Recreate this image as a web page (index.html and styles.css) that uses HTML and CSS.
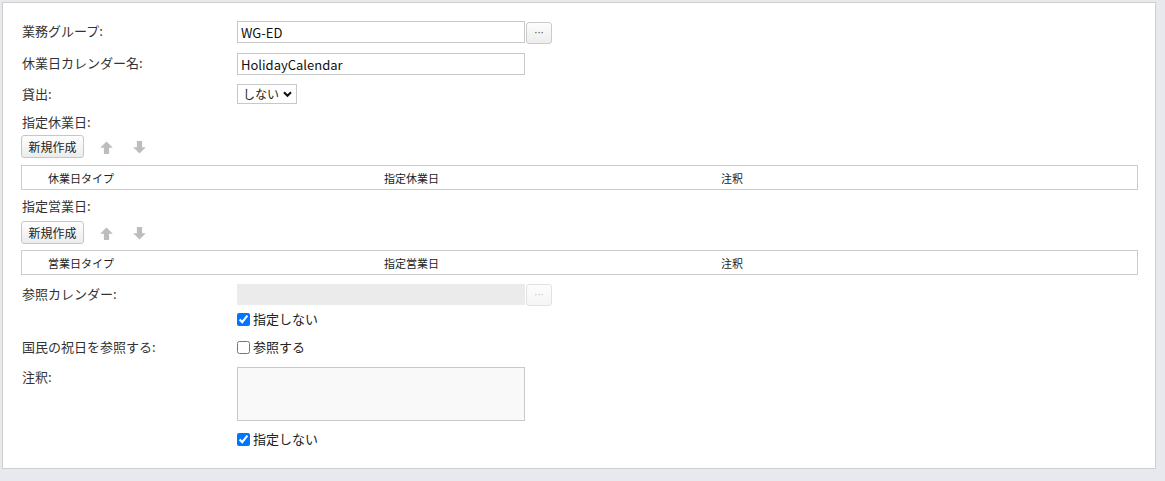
FILE: index.html
```html
<!DOCTYPE html>
<html lang="ja">
<head>
<meta charset="utf-8">
<link rel="stylesheet" href="styles.css">
</head>
<body>
<div class="panel">
  <div class="row r1">
    <div class="label">業務グループ:</div>
    <div class="field">
      <input class="text" type="text" value="WG-ED">
      <button class="dots">&middot;&middot;&middot;</button>
    </div>
  </div>
  <div class="row r2">
    <div class="label">休業日カレンダー名:</div>
    <div class="field"><input class="text" type="text" value="HolidayCalendar"></div>
  </div>
  <div class="row r3">
    <div class="label">貸出:</div>
    <div class="field">
      <span class="select-wrap">
        <select class="select"><option>しない</option></select>
        <svg class="chev" viewBox="0 0 10 8" width="9" height="7"><path d="M1 1.5 L5 5.5 L9 1.5" fill="none" stroke="#111" stroke-width="2.4"/></svg>
      </span>
    </div>
  </div>

  <div class="section s1">
    <div class="sec-label">指定休業日:</div>
    <div class="toolbar">
      <button class="btn">新規作成</button>
      <svg class="arrow" viewBox="0 0 12 12" width="13" height="13"><path d="M6 0.5 L11.8 6.3 L8.4 6.3 L8.4 12 L3.6 12 L3.6 6.3 L0.2 6.3 Z" fill="#bdbdbd"/></svg>
      <svg class="arrow" viewBox="0 0 12 12" width="13" height="13"><path d="M6 11.5 L11.8 5.7 L8.4 5.7 L8.4 0 L3.6 0 L3.6 5.7 L0.2 5.7 Z" fill="#bdbdbd"/></svg>
    </div>
    <div class="grid-head">
      <div class="c1">休業日タイプ</div>
      <div class="c2">指定休業日</div>
      <div class="c3">注釈</div>
    </div>
  </div>

  <div class="section s2">
    <div class="sec-label">指定営業日:</div>
    <div class="toolbar">
      <button class="btn">新規作成</button>
      <svg class="arrow" viewBox="0 0 12 12" width="13" height="13"><path d="M6 0.5 L11.8 6.3 L8.4 6.3 L8.4 12 L3.6 12 L3.6 6.3 L0.2 6.3 Z" fill="#bdbdbd"/></svg>
      <svg class="arrow" viewBox="0 0 12 12" width="13" height="13"><path d="M6 11.5 L11.8 5.7 L8.4 5.7 L8.4 0 L3.6 0 L3.6 5.7 L0.2 5.7 Z" fill="#bdbdbd"/></svg>
    </div>
    <div class="grid-head">
      <div class="c1">営業日タイプ</div>
      <div class="c2">指定営業日</div>
      <div class="c3">注釈</div>
    </div>
  </div>

  <div class="row r4">
    <div class="label">参照カレンダー:</div>
    <div class="field col">
      <div class="inline">
        <input class="text disabled" type="text" disabled>
        <button class="dots off" disabled>&middot;&middot;&middot;</button>
      </div>
      <label class="check c-a"><input type="checkbox" checked><span>指定しない</span></label>
    </div>
  </div>

  <div class="row r5">
    <div class="label">国民の祝日を参照する:</div>
    <div class="field">
      <label class="check"><input type="checkbox"><span>参照する</span></label>
    </div>
  </div>

  <div class="row r6">
    <div class="label">注釈:</div>
    <div class="field col">
      <textarea class="note"></textarea>
      <label class="check c-b"><input type="checkbox" checked><span>指定しない</span></label>
    </div>
  </div>
</div>
</body>
</html>
```
FILE: styles.css
```css
* { box-sizing: border-box; }
html, body { margin: 0; padding: 0; }
body {
  background: #e8e9ee;
  font-family: "Noto Sans CJK JP", "Noto Sans", sans-serif;
  font-size: 13px;
  color: #333;
  height: 481px;
  overflow: hidden;
}
.panel {
  margin: 2px 0 0 2px;
  width: 1154px;
  height: 467px;
  background: #fff;
  border: 1px solid #cfcfcf;
  padding: 18px 17px 0 18px;
}
.row { display: flex; align-items: flex-start; }
.label {
  width: 216px;
  flex: none;
  line-height: 20px;
  padding-left: 1px;
}
.field { display: flex; align-items: flex-start; }
.field.col { flex-direction: column; }
.inline { display: flex; align-items: flex-start; }
.r2 { margin-top: 9px; }
.r3 { margin-top: 9px; }
input.text {
  width: 288px;
  height: 22px;
  border: 1px solid #c8c8c8;
  padding: 0 3px;
  font: inherit;
  font-size: 13px;
  color: #111;
  outline: none;
}
input.text.disabled { background: #ebebeb; border-color: #ebebeb; height: 21px; }
.dots {
  width: 26px;
  height: 22px;
  margin: 1px 0 0 1px;
  border: 1px solid #cbcbcb;
  border-radius: 3px;
  background: linear-gradient(#fdfdfd, #ededed);
  font-size: 10px;
  line-height: 20px;
  color: #444;
  padding: 0;
  font-family: "DejaVu Sans", sans-serif;
  letter-spacing: 0;
  text-align: center;
}
.dots.off { color: #c4c4c4; border-color: #e2e2e2; background: linear-gradient(#fdfdfd, #f5f5f5); margin-top: 0; }
.select-wrap { position: relative; display: inline-block; }
.select {
  appearance: none;
  -webkit-appearance: none;
  width: 60px;
  height: 20px;
  border: 1px solid #c8c8c8;
  border-radius: 0;
  background: #fff;
  font: inherit;
  font-size: 12px;
  line-height: 18px;
  color: #222;
  padding: 0 0 0 5px;
}
.chev { position: absolute; left: 46px; top: 7px; pointer-events: none; }

.section { display: flex; flex-direction: column; }
.s1 { margin-top: 8px; }
.s2 { margin-top: 6px; }
.sec-label { line-height: 20px; padding-left: 1px; }
.toolbar { display: flex; align-items: center; margin-top: 3px; }
.s2 .toolbar { margin-top: 5px; }
.btn {
  height: 23px;
  width: 63px;
  border: 1px solid #c6c6c6;
  border-radius: 3px;
  background: linear-gradient(#fefefe, #ececec);
  font-family: inherit;
  font-size: 12px;
  color: #222;
  padding: 0;
  line-height: 20px;
}
.arrow { margin-left: 16px; margin-top: 2px; }
.arrow + .arrow { margin-left: 20px; }
.grid-head {
  margin-top: 7px;
  height: 25px;
  width: 1117px;
  border: 1px solid #cccccc;
  display: flex;
  align-items: center;
  font-size: 11px;
  color: #222;
}
.s2 .grid-head { margin-top: 6px; }
.grid-head .c1 { width: 362px; padding-left: 26px; }
.grid-head .c2 { width: 337px; }
.grid-head .c3 { flex: 1; }

.r4 { margin-top: 9px; }
.check { display: flex; align-items: center; line-height: 20px; font-size: 13px; color: #222; }
.check input { margin: 0 3px 0 0; width: 13px; height: 13px; }
.c-a { margin-top: 3px; }
.r5 { margin-top: 8px; }
.r6 { margin-top: 10px; }
.note {
  width: 288px;
  height: 54px;
  border: 1px solid #c8c8c8;
  background: #f9f9f9;
  resize: none;
  font: inherit;
}
.c-b { margin-top: 8px; }
```
